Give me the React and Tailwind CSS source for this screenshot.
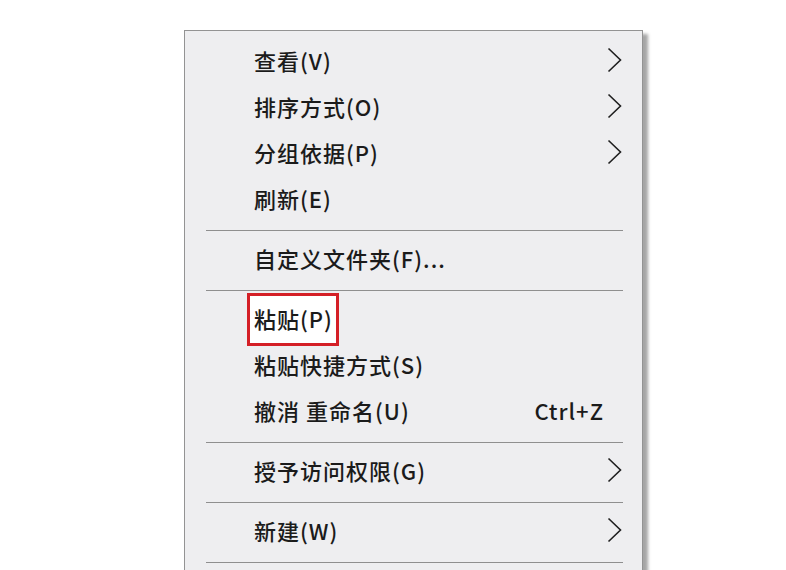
import React from "react";

const groups = [
  [
    { label: "查看(V)", sub: true },
    { label: "排序方式(O)", sub: true },
    { label: "分组依据(P)", sub: true },
    { label: "刷新(E)" },
  ],
  [{ label: "自定义文件夹(F)..." }],
  [
    { label: "粘贴(P)", marked: true },
    { label: "粘贴快捷方式(S)" },
    { label: "撤消 重命名(U)", shortcut: "Ctrl+Z" },
  ],
  [{ label: "授予访问权限(G)", sub: true }],
  [{ label: "新建(W)", sub: true }],
];

function Chevron() {
  return (
    <svg width="15" height="26" viewBox="0 0 15 26" fill="none">
      <polyline points="1.5,1.5 13.5,13 1.5,24.5" stroke="#1f1f1f" strokeWidth="1.6" />
    </svg>
  );
}

function MenuItem({ item }) {
  return (
    <div className="relative flex h-[46px] items-center pl-[69px] pr-[20px]">
      {item.marked && (
        <div className="absolute left-[62px] top-[-2px] h-[53px] w-[92px] border-[3px] border-[#d41f26] bg-white" />
      )}
      <span className="relative">{item.label}</span>
      <span className="ml-auto flex items-center">
        {item.shortcut && <span className="mr-[18px]">{item.shortcut}</span>}
        {item.sub && <Chevron />}
      </span>
    </div>
  );
}

function Separator() {
  return (
    <div className="pb-[4px] pl-[21px] pr-[19px] pt-[9px]">
      <div className="h-px bg-[#8f8f8f]" />
    </div>
  );
}

export default function App() {
  return (
    <div className="h-[570px] overflow-hidden bg-white pl-[184px] pt-[30px]">
      <div
        className="w-[459px] border border-[#939393] bg-[#eeeef0] pb-[40px] pt-[6px] text-[22px] font-medium tracking-[1px] text-[#1b1b1b] shadow-[5px_4px_3px_rgba(0,0,0,0.35)]"
        style={{ fontFamily: '"Noto Sans CJK SC", "Noto Sans", sans-serif' }}
      >
        {groups.map((group, i) => (
          <div key={i}>
            {group.map((item) => (
              <MenuItem key={item.label} item={item} />
            ))}
            <Separator />
          </div>
        ))}
      </div>
    </div>
  );
}
